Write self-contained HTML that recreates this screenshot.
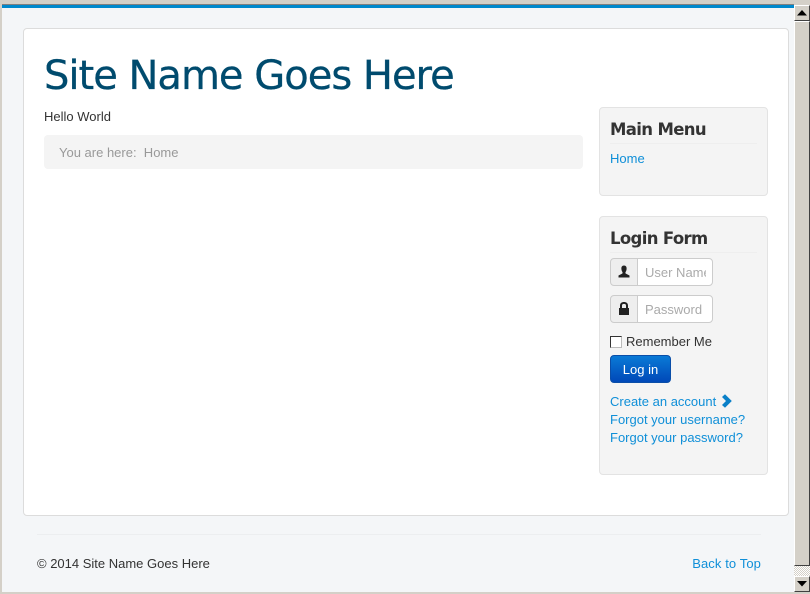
<!DOCTYPE html>
<html><head><meta charset="utf-8"><style>
html,body{margin:0;padding:0;width:810px;height:594px;overflow:hidden;background:#f4f6f8;font-family:"Liberation Sans",sans-serif;font-size:13px;color:#333}
div,a,span,svg{position:absolute;white-space:nowrap;box-sizing:border-box}
a{color:#0f8fd8;text-decoration:none}
.t{line-height:18px;margin-top:1px}
.well{background:#f4f4f4;border:1px solid #e3e3e3;border-radius:4px;left:599px;width:169px}
.h{font-family:"DejaVu Sans",sans-serif;font-weight:bold;font-size:16.5px;color:#333;left:610px;line-height:24px;letter-spacing:-.65px;margin-top:1px}
.hr{left:610px;width:147px;height:1px;background:#eeeeee}
.add{left:610px;width:28px;height:28px;background:#eeeeee;border:1px solid #cccccc;border-radius:4px 0 0 4px}
.inp{left:637px;width:76px;height:28px;background:#fff;border:1px solid #cccccc;border-radius:0 4px 4px 0;color:#aaa}
.inp div{left:7px;top:0;width:61px;height:26px;line-height:28px;overflow:hidden}
</style></head><body>
<div style="left:0;top:0;width:810px;height:4px;background:#d4d0c8"></div>
<div style="left:2px;top:4px;width:792px;height:1px;background:#808080"></div>
<div style="left:2px;top:5px;width:792px;height:3px;background:#0088cc"></div>
<div style="left:0;top:0;width:2px;height:594px;background:#d4d0c8"></div>
<div style="left:0;top:592px;width:810px;height:2px;background:#d4d0c8"></div>

<div style="left:23px;top:28px;width:766px;height:488px;background:#fff;border:1px solid #dcdcdc;border-radius:4px"></div>

<div id="title" style="left:44px;top:48px;font-family:'DejaVu Sans',sans-serif;font-size:40px;line-height:56px;color:#004b6e;letter-spacing:-1px;-webkit-text-stroke:.3px #004b6e">Site Name Goes Here</div>
<div class="t" style="left:44px;top:107px">Hello World</div>
<div style="left:44px;top:135px;width:539px;height:34px;background:#f4f4f4;border-radius:4px"></div>
<div class="t" style="left:59px;top:143px;color:#999;white-space:pre">You are here:  Home</div>

<div class="well" style="top:107px;height:89px"></div>
<div class="h" style="top:117px">Main Menu</div>
<div class="hr" style="top:143px"></div>
<a class="t" style="left:610px;top:149px">Home</a>

<div class="well" style="top:216px;height:259px"></div>
<div class="h" style="top:226px">Login Form</div>
<div class="hr" style="top:252px"></div>

<div class="add" style="top:258px"></div>
<svg style="left:617px;top:265px" width="14" height="14" viewBox="0 0 14 14"><path d="M7 0.5C5 0.5 4.2 2 4.4 4C4.5 5.5 5 6.5 5.600 7.200L5.400 8.500L1.500 10.500V12.500H12.500V10.500L8.600 8.500L8.400 7.200C9 6.500 9.500 5.500 9.600 4C9.800 2 9 0.500 7 0.500Z" fill="#222"/></svg>
<div class="inp" style="top:258px"><div>User Name</div></div>

<div class="add" style="top:295px"></div>
<svg style="left:617px;top:301px" width="14" height="15" viewBox="0 0 14 15"><path d="M2 7H3V4.500C3 2.200 4.700 1 7 1S11 2.200 11 4.500V7H12V14H2ZM5 7H9V4.500C9 3.400 8.200 2.900 7 2.900S5 3.400 5 4.500Z" fill="#222" fill-rule="evenodd"/></svg>
<div class="inp" style="top:295px"><div>Password</div></div>

<div style="left:610px;top:336px;width:12px;height:12px;background:#fff;border:1px solid #333;border-right-color:#bbb;border-bottom-color:#bbb"></div>
<div class="t" style="left:626px;top:332px">Remember Me</div>

<div style="left:610px;top:355px;width:61px;height:28px;background:linear-gradient(#0a7ad6,#0048b8);border:1px solid #0a4ea8;border-radius:4px;color:#fff;text-align:center;line-height:28px">Log in</div>

<a class="t" style="left:610px;top:392px">Create an account</a>
<svg style="left:721px;top:394px" width="12" height="14" viewBox="0 0 12 14"><path d="M1 3L4 0.300L10.800 7L4 13.700L1 11L5 7Z" fill="#0a80c8"/></svg>
<a class="t" style="left:610px;top:410px">Forgot your username?</a>
<a class="t" style="left:610px;top:428px">Forgot your password?</a>

<div style="left:37px;top:534px;width:724px;height:1px;background:#eceef0"></div>
<div class="t" style="left:37px;top:554px">© 2014 Site Name Goes Here</div>
<a class="t" style="right:49px;top:554px;letter-spacing:.1px">Back to Top</a>

<div style="left:794px;top:0;width:16px;height:594px;background:#d4d0c8"></div>
<div style="left:794px;top:5px;width:16px;height:587px;background:repeating-conic-gradient(#d4d0c8 0 25%,#fff 0 50%) 0 0/2px 2px"></div>
<div style="left:794px;top:21px;width:16px;height:545px;background:#d4d0c8;border:1px solid;border-color:#fff #404040 #404040 #fff"></div>
<div style="left:794px;top:5px;width:16px;height:16px;background:#d4d0c8;border:1px solid;border-color:#fff #404040 #404040 #fff"></div>
<div style="left:794px;top:576px;width:16px;height:16px;background:#d4d0c8;border:1px solid;border-color:#fff #404040 #404040 #fff"></div>
<svg style="left:797px;top:10px" width="10" height="6"><path d="M5 0L10 5.500H0Z" fill="#000"/></svg>
<svg style="left:797px;top:581px" width="10" height="6"><path d="M0 0H10L5 5.500Z" fill="#000"/></svg>
</body></html>
